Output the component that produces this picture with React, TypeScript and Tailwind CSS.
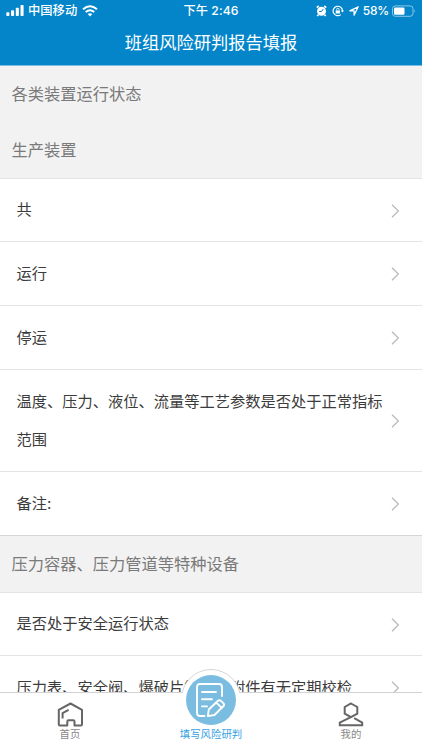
import React from 'react';

function Chevron() {
  return (
    <svg className="mt-[1px] w-[9px] h-[14px] flex-shrink-0" viewBox="0 0 9 14" fill="none" stroke="#b8b8b8" strokeWidth="1.2">
      <path d="M1 0.8L7.4 7L1 13.2" />
    </svg>
  );
}

function Section({ title, className }: { title: string; className: string }) {
  return (
    <h2 className={`flex-shrink-0 flex items-center pl-[11.5px] bg-[#f2f2f2] text-[16.25px] text-[#7a7a7a] ${className}`}>
      {title}
    </h2>
  );
}

function Row({ label, className }: { label: string; className: string }) {
  return (
    <button className={`flex-shrink-0 w-full flex items-center justify-between pl-[16.5px] pr-[22px] border-[#e4e4e4] text-left ${className}`}>
      <span className="w-[368px] text-[15.25px] leading-[38px] text-[#3c3c3c]">{label}</span>
      <Chevron />
    </button>
  );
}

function StatusBar() {
  return (
    <div className="h-[20px] grid grid-cols-[1fr_auto_1fr] items-center text-[12px] leading-[20px]">
      <div className="flex items-center pl-[6px]">
        <svg className="w-[18px] h-[11px]" viewBox="0 0 18 11" fill="white">
          <rect x="0.3" y="7.2" width="3.1" height="3.8" rx="0.8" />
          <rect x="5" y="5.2" width="3.1" height="5.8" rx="0.8" />
          <rect x="9.8" y="2.8" width="3.1" height="8.2" rx="0.8" />
          <rect x="14.5" y="0" width="3.1" height="11" rx="0.8" />
        </svg>
        <span className="ml-[4px] pt-[1px] text-[12.3px] font-medium">中国移动</span>
        <svg className="ml-[5px] w-[16px] h-[12px]" viewBox="0 0 16 12" fill="none" stroke="white" strokeWidth="2">
          <path d="M1 4.3Q8 -1.9 15 4.3" />
          <path d="M3.7 7.1Q8 3.4 12.3 7.1" />
          <path d="M8 11.4L5.7 9.1Q8 7.3 10.3 9.1Z" fill="white" stroke="none" />
        </svg>
      </div>
      <span className="pt-[1px] text-[12.2px] font-medium tracking-[0.1px]">下午 2:46</span>
      <div className="flex items-center justify-end pr-[6px]">
        <svg className="w-[11px] h-[12px]" viewBox="0 0 11 12" fill="none">
          <circle cx="5.5" cy="6.2" r="4.5" fill="white" />
          <path d="M0.8 2.7L2.7 1M10.2 2.7L8.3 1M2.4 9.8L1.2 11M8.6 9.8L9.8 11" stroke="white" strokeWidth="1.7" />
          <path d="M7.3 4L5.5 6.5H3.2" stroke="#0485ca" strokeWidth="1" />
        </svg>
        <svg className="ml-[5px] w-[12px] h-[12px]" viewBox="0 0 12 12" fill="none" stroke="white">
          <path d="M10.5 6A4.7 4.7 0 1 0 8.8 9.6" strokeWidth="1.2" />
          <path d="M8.8 5.4H12L10.4 7.6Z" fill="white" stroke="none" />
          <rect x="3.7" y="5.5" width="4.2" height="3" fill="white" stroke="none" />
          <path d="M4.6 5.5V4.5A1.2 1.2 0 0 1 7 4.5V5.5" strokeWidth="0.9" />
        </svg>
        <svg className="ml-[5px] w-[10px] h-[10px]" viewBox="0 0 10 10" fill="none" stroke="white" strokeWidth="1.3" strokeLinejoin="round">
          <path d="M9.2 0.8L0.8 4.8H5.1V9.2Z" />
        </svg>
        <span className="ml-[4px] text-[12px] font-medium tracking-[-0.2px]">58%</span>
        <svg className="ml-[3px] w-[24px] h-[12px]" viewBox="0 0 24 12" fill="none">
          <rect x="0.5" y="0.9" width="20.5" height="10.4" rx="2.8" stroke="#8cc7e8" />
          <rect x="2" y="2.4" width="10.5" height="7.4" rx="1.3" fill="white" />
          <path d="M22.4 4.2Q24 6 22.4 7.8Z" fill="#8cc7e8" />
        </svg>
      </div>
    </div>
  );
}

function TabBar() {
  return (
    <nav className="relative h-[58px] flex-shrink-0 grid grid-cols-[140px_142px_140px] border-t border-[#d2d2d2] bg-white text-[10.4px] leading-[14px] text-[#888888]">
      <button className="flex flex-col items-center pt-[9px]">
        <svg className="w-[26px] h-[25px]" viewBox="0 0 26 25" fill="none" stroke="#666" strokeWidth="2" strokeLinejoin="round">
          <path d="M1.8 22.5V7.8L13.5 1.5L25 7.8V22.5Q25 23.6 23.8 23.6H17.5V19.5Q17.5 18.2 16.2 18.2H11.6Q10.3 18.2 10.3 19.5V23.6H3Q1.8 23.6 1.8 22.5Z" />
          <path d="M5.6 16.5V11.2L11.6 7.8" />
        </svg>
        <span className="mt-px">首页</span>
      </button>
      <button className="relative flex flex-col items-center text-[#36a1e2]">
        {/* raised button that sticks out above the bar */}
        <span className="absolute left-[41px] -top-[24px] w-[60px] h-[60px] rounded-full bg-white border border-[#d6d6d6]" />
        <span className="absolute left-[38px] top-0 w-[66px] h-[42px] bg-white" />
        <span className="absolute left-[46px] -top-[18px] w-[50px] h-[50px] rounded-full bg-[#7bbde1] flex items-center justify-center">
          <svg className="w-[32px] h-[36px]" viewBox="0 0 32 36" fill="none" stroke="white" strokeWidth="1.9" strokeLinejoin="round" strokeLinecap="round">
            <path d="M9.5 34H5Q2 34 2 31V5Q2 2 5 2H24Q27 2 27 5V14" />
            <path d="M7 10H21M7 17.3H17M7 24.4H12" />
            <path d="M12.8 34.1L13.8 27.5L23 18.8Q24.5 17.5 26 18.8L28.5 21.3Q29.8 22.6 28.5 24L19.5 33L12.8 34.1Z" />
            <path d="M21.2 20.6L26.7 25.8" />
          </svg>
        </span>
        <span className="relative mt-[35px]">填写风险研判</span>
      </button>
      <button className="flex flex-col items-center pt-[9px] pr-[2px]">
        <svg className="w-[26px] h-[25px]" viewBox="0 0 26 25" fill="none" stroke="#666" strokeWidth="2">
          <path d="M13 1.5L19.3 5V11.6L13 15.2L6.7 11.6V5Z" />
          <path d="M12.8 15.1L1.8 20.5V23.3H24.2V20.5L16.2 16.2" />
        </svg>
        <span className="mt-px">我的</span>
      </button>
    </nav>
  );
}

export default function App() {
  return (
    <div className="w-[422px] h-[750px] flex flex-col overflow-hidden bg-white font-['Inter','Noto_Sans_CJK_SC',sans-serif]">
      <header className="h-[66px] flex-shrink-0 bg-[#0485ca] border-b border-[#79bfe5] text-white">
        <StatusBar />
        <h1 className="text-center text-[17.25px] leading-[46px]">班组风险研判报告填报</h1>
      </header>

      <main className="flex-1 min-h-0 flex flex-col overflow-hidden">
        <Section title="各类装置运行状态" className="h-[56px]" />
        <Section title="生产装置" className="h-[56px]" />
        <Row label="共" className="h-[63px] border-t" />
        <Row label="运行" className="h-[64px] border-t" />
        <Row label="停运" className="h-[64px] border-t" />
        <Row label="温度、压力、液位、流量等工艺参数是否处于正常指标范围" className="h-[102px] border-t" />
        <Row label="备注:" className="h-[64px] border-t" />
        <Section title="压力容器、压力管道等特种设备" className="h-[57px] border-t border-[#d6d6d6]" />
        <Row label="是否处于安全运行状态" className="h-[63px] border-t" />
        <Row label="压力表、安全阀、爆破片等安全附件有无定期校检" className="h-[64px] border-t" />
      </main>

      <TabBar />
    </div>
  );
}
